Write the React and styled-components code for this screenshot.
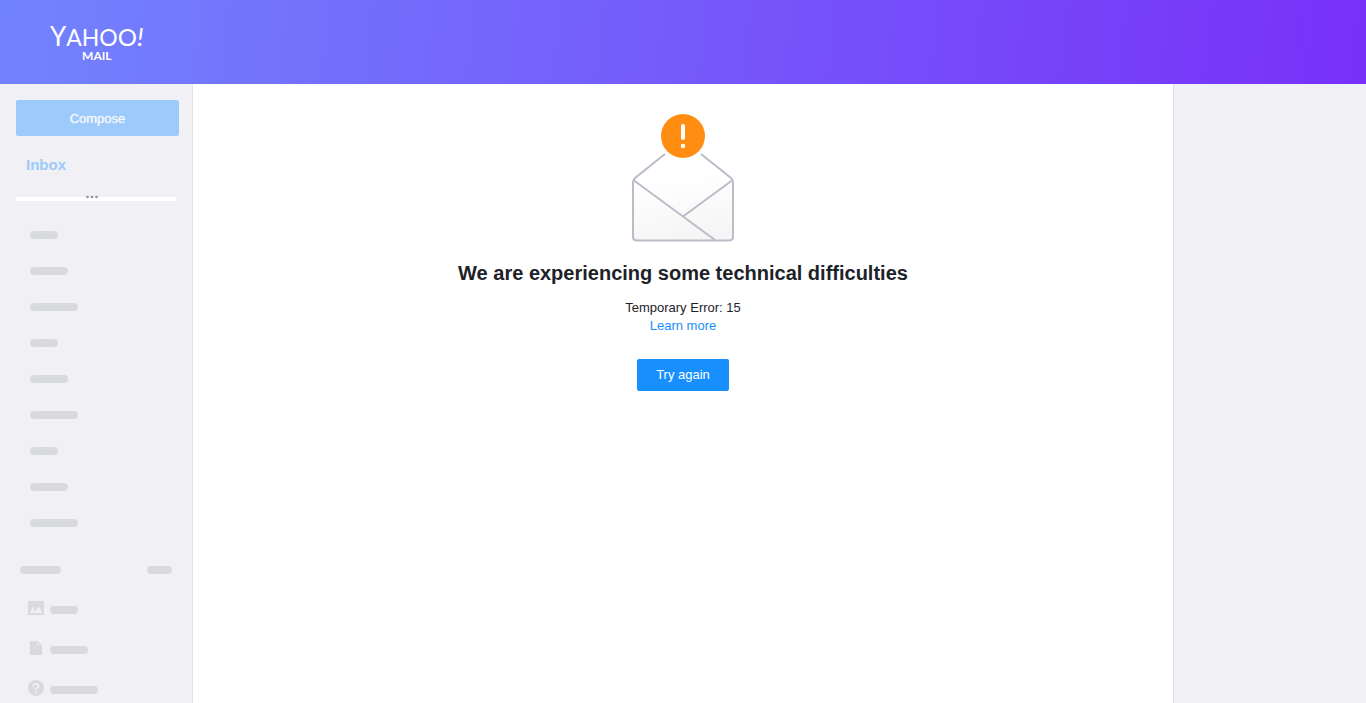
import React from "react";
import styled, { createGlobalStyle } from "styled-components";

const GlobalStyle = createGlobalStyle`
  * { box-sizing: border-box; }
  body {
    margin: 0;
    background: #fff;
    color: #1d2228;
    font-family: "Liberation Sans", Arial, sans-serif;
    font-size: 13px;
    line-height: 18px;
  }
`;

const Page = styled.div`
  display: flex;
  flex-direction: column;
  min-height: 100vh;
`;

const Header = styled.header`
  display: flex;
  align-items: flex-start;
  height: 84px;
  padding: 24px 50px 0;
  background: linear-gradient(97deg, #7284fd 0%, #7830f8 100%);
`;

const Logo = styled.a`
  display: flex;
  flex-direction: column;
  align-items: center;
  color: #fff;
  font-family: Lato, sans-serif;
  text-decoration: none;
`;

const Brand = styled.span`
  display: flex;
  align-items: baseline;
  line-height: 24px;
`;

const Letters = styled.span`
  font-size: ${(p) => p.$size}px;
  font-style: ${(p) => (p.$slanted ? "italic" : "normal")};
`;

const Product = styled.span`
  font-size: 12px;
  line-height: 14px;
  font-weight: bold;
`;

const Body = styled.div`
  display: flex;
  flex: 1;
`;

const Sidebar = styled.nav`
  width: 193px;
  padding: 16px 13px 0 16px;
  background: #f0f0f5;
  border-right: 1px solid #e0e4e9;
`;

const Aside = styled.aside`
  width: 193px;
  background: #f0f0f5;
  border-left: 1px solid #e0e0e6;
`;

const ComposeButton = styled.button`
  display: block;
  width: 100%;
  height: 36px;
  padding: 2px 0 0;
  border: 0;
  border-radius: 2px;
  background: #9bcafb;
  color: #f4f6fb;
  font: 13px/18px "Liberation Sans", Arial, sans-serif;
  text-shadow: 0 0 1px #f4f6fb;
`;

const InboxLink = styled.a`
  display: block;
  margin: 20px 10px 23px;
  color: #9bcafb;
  font-size: 15px;
  font-weight: bold;
  text-decoration: none;
`;

const Divider = styled.div`
  position: relative;
  height: 4px;
  margin-right: 3px;
  background: #fff;
`;

const Dots = styled.svg`
  position: absolute;
  top: -2px;
  left: 70px;
  width: 12px;
  height: 4px;
  fill: #8d919e;
`;

const Folders = styled.div`
  display: flex;
  flex-direction: column;
  gap: 28px;
  margin: 30px 14px 39px;
`;

const Bar = styled.span`
  display: block;
  width: ${(p) => p.$width}px;
  height: 8px;
  border-radius: 4px;
  background: #d8dade;
`;

const SectionHead = styled.div`
  display: flex;
  justify-content: space-between;
  padding: 0 7px 0 4px;
`;

const Shortcuts = styled.div`
  display: flex;
  flex-direction: column;
  gap: 24px;
  margin: 26px 12px 0;
`;

const Shortcut = styled.div`
  display: flex;
  align-items: flex-end;
  gap: 6px;
  height: 16px;

  ${Bar} { margin-bottom: 2px; }
`;

const ShortcutIcon = styled.svg`
  width: 16px;
  height: 16px;
  fill: #d8dade;
`;

const Main = styled.main`
  display: flex;
  flex: 1;
  flex-direction: column;
  align-items: center;
  padding: 29px 20px;
  text-align: center;
`;

const Envelope = styled.svg`
  width: 104px;
  height: 130px;
`;

const Title = styled.h1`
  margin: 18px 0 14px;
  font-size: 20px;
  line-height: 24px;
  font-weight: bold;
`;

const Message = styled.p`
  margin: 0;
`;

const LearnMore = styled.a`
  color: #188fff;
  text-decoration: none;
`;

const RetryButton = styled.button`
  height: 32px;
  width: 92px;
  margin-top: 24px;
  padding: 0;
  border: 0;
  border-radius: 2px;
  background: #188fff;
  color: #fff;
  font: 13px/18px "Liberation Sans", Arial, sans-serif;
`;

const folderWidths = [28, 38, 48, 28, 38, 48, 28, 38, 48];

function PhotoIcon() {
  return (
    <ShortcutIcon viewBox="0 0 16 16" aria-hidden="true">
      <path
        fillRule="evenodd"
        d="M.5 1h15a.5.5 0 0 1 .5.5v13a.5.5 0 0 1-.5.5H.5a.5.5 0 0 1-.5-.5v-13A.5.5 0 0 1 .5 1ZM1.500 13H4.600L6.300 9V7.200L5.300 7ZM5.200 13H14.500L10.500 6 7.500 11 6.500 10Z"
      />
    </ShortcutIcon>
  );
}

function DocumentIcon() {
  return (
    <ShortcutIcon viewBox="0 0 16 16" aria-hidden="true">
      <path
        fillRule="evenodd"
        d="M3 1h6.500L14 5.500V14a1 1 0 0 1-1 1H3a1 1 0 0 1-1-1V2a1 1 0 0 1 1-1ZM9 2.500V5.500H11.500Z"
      />
    </ShortcutIcon>
  );
}

function HelpIcon() {
  return (
    <ShortcutIcon viewBox="0 0 16 16" aria-hidden="true">
      <circle cx="8" cy="8" r="8" />
      <path
        d="M5.4 6.3C5.4 4.600 6.500 3.800 8 3.800s2.600.9 2.600 2.300C10.600 7.800 8 7.900 8 10"
        fill="none"
        stroke="#f0f0f5"
        strokeWidth="1.8"
      />
      <circle cx="8" cy="12" r="1" fill="#f0f0f5" />
    </ShortcutIcon>
  );
}

function ErrorEnvelope() {
  return (
    <Envelope viewBox="0 0 104 130" fill="none" aria-hidden="true">
      <defs>
        <linearGradient id="paper" x1="44" y1="65" x2="56" y2="128" gradientUnits="userSpaceOnUse">
          <stop offset="0" stopColor="#fff" />
          <stop offset="1" stopColor="#f5f5f5" />
        </linearGradient>
      </defs>
      <path
        d="M34 41 4 65Q2 67 2 70V123.500Q2 127.500 6 127.500H98Q102 127.500 102 123.500V70Q102 67 100 65L70 41"
        fill="url(#paper)"
        stroke="#b9bdc8"
        strokeWidth="2"
      />
      <path d="M3 67.500 84 127M52 103.500 101 67.500" stroke="#b9bdc8" strokeWidth="2" />
      <circle cx="52" cy="23" r="22" fill="#ff8d12" />
      <path d="M52 13V25" stroke="#fff" strokeWidth="4" strokeLinecap="round" />
      <circle cx="52" cy="33" r="2.2" fill="#fff" />
    </Envelope>
  );
}

export default function App() {
  return (
    <>
      <GlobalStyle />
      <Page>
        <Header>
          <Logo href="#">
            <Brand>
              <Letters $size={26}>Y</Letters>
              <Letters $size={23}>AHO</Letters>
              <Letters $size={24}>O</Letters>
              <Letters $size={26} $slanted>!</Letters>
            </Brand>
            <Product>MAIL</Product>
          </Logo>
        </Header>
        <Body>
          <Sidebar>
            <ComposeButton type="button">Compose</ComposeButton>
            <InboxLink href="#">Inbox</InboxLink>
            <Divider>
              <Dots viewBox="0 0 12 4" aria-hidden="true">
                <circle cx="1.500" cy="2" r="1.3" />
                <circle cx="6" cy="2" r="1.3" />
                <circle cx="10.500" cy="2" r="1.3" />
              </Dots>
            </Divider>
            <Folders>
              {folderWidths.map((width, i) => (
                <Bar key={i} $width={width} />
              ))}
            </Folders>
            <SectionHead>
              <Bar $width={41} />
              <Bar $width={25} />
            </SectionHead>
            <Shortcuts>
              <Shortcut><PhotoIcon /><Bar $width={28} /></Shortcut>
              <Shortcut><DocumentIcon /><Bar $width={38} /></Shortcut>
              <Shortcut><HelpIcon /><Bar $width={48} /></Shortcut>
            </Shortcuts>
          </Sidebar>
          <Main>
            <ErrorEnvelope />
            <Title>We are experiencing some technical difficulties</Title>
            <Message>Temporary Error: 15</Message>
            <LearnMore href="#">Learn more</LearnMore>
            <RetryButton type="button">Try again</RetryButton>
          </Main>
          <Aside />
        </Body>
      </Page>
    </>
  );
}
